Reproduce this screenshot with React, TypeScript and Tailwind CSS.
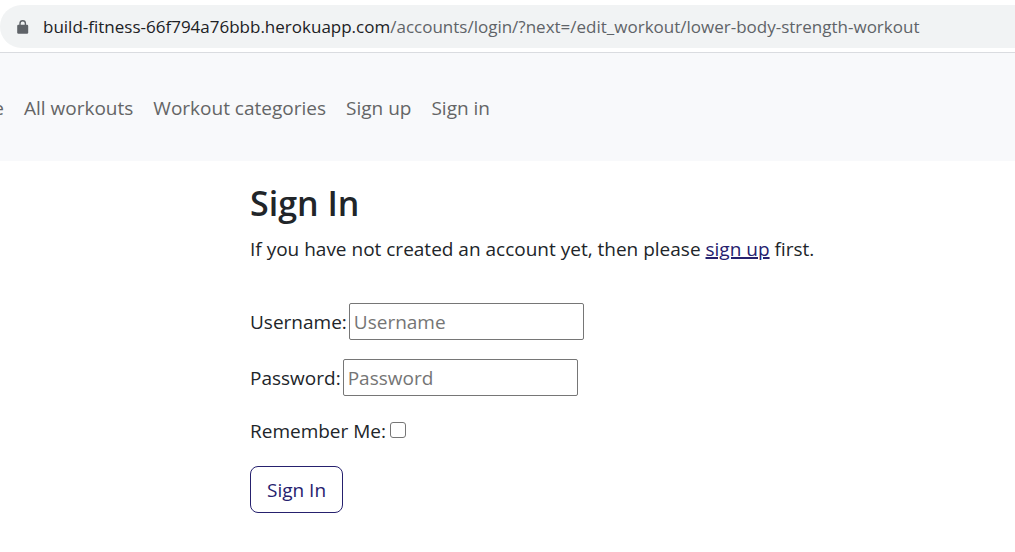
import React from "react";

const links = ["All workouts", "Workout categories", "Sign up", "Sign in"];

function AddressBar() {
  return (
    <div className="border-b border-[#dadce0] bg-white pt-[5px] pb-1">
      <div className="flex h-[43px] items-center gap-[13px] overflow-hidden rounded-l-full bg-[#f1f3f4] pl-4 text-[17px]">
        <svg viewBox="0 0 14 16" className="h-4 w-3.5 shrink-0" aria-hidden="true">
          <path
            d="M4 7V4.4a2.7 2.7 0 0 1 5.4 0V7"
            fill="none"
            stroke="#5f6368"
            strokeWidth="1.4"
          />
          <rect x="1.2" y="5.8" width="11" height="9" rx="1.2" fill="#5f6368" />
        </svg>
        <div className="whitespace-nowrap text-[#5f6368]">
          <span className="text-[#202124]">build-fitness-66f794a76bbb.herokuapp.com</span>
          /accounts/login/?next=/edit_workout/lower-body-strength-workout
        </div>
      </div>
    </div>
  );
}

function NavBar() {
  return (
    <nav className="flex h-27 items-center gap-5 overflow-hidden bg-[#f8f9fb] pt-0.5 text-[19px] text-[#646566]">
      <a href="#home" className="flex w-1 shrink-0 justify-end">
        Home
      </a>
      {links.map((label) => (
        <a key={label} href="#nav" className="whitespace-nowrap">
          {label}
        </a>
      ))}
    </nav>
  );
}

export default function App() {
  return (
    <div className="min-h-screen bg-white font-['Open_Sans','Noto_Sans',sans-serif] text-[#212529]">
      <AddressBar />
      <NavBar />
      <main className="pt-5 pl-[250px] text-[19px] leading-[30px]">
        <h1 className="mb-2 text-[34px] leading-[45px] font-semibold">Sign In</h1>
        <p>
          If you have not created an account yet, then please{" "}
          <a href="#signup" className="text-[#26216e] underline decoration-2">
            sign up
          </a>{" "}
          first.
        </p>
        <form className="mt-[39px] flex flex-col items-start gap-[19px]">
          <div className="flex items-center gap-0.5">
            <label htmlFor="username">Username:</label>
            <input
              id="username"
              type="text"
              placeholder="Username"
              className="h-[37px] w-[235px] rounded-[2px] border border-[#767676] px-1 placeholder:text-[#757575]"
            />
          </div>
          <div className="flex items-center gap-0.5">
            <label htmlFor="password">Password:</label>
            <input
              id="password"
              type="password"
              placeholder="Password"
              className="h-[37px] w-[235px] rounded-[2px] border border-[#767676] px-1 placeholder:text-[#757575]"
            />
          </div>
          <div className="flex h-8 items-center gap-1">
            <label htmlFor="remember">Remember Me:</label>
            <input
              id="remember"
              type="checkbox"
              className="mb-0.5 size-4 appearance-none rounded-[3px] border border-[#767676] bg-white checked:bg-[#26216e]"
            />
          </div>
          <button
            type="button"
            className="h-[47px] rounded-lg border border-[#26216e] px-4 text-[#26216e]"
          >
            Sign In
          </button>
        </form>
      </main>
    </div>
  );
}
